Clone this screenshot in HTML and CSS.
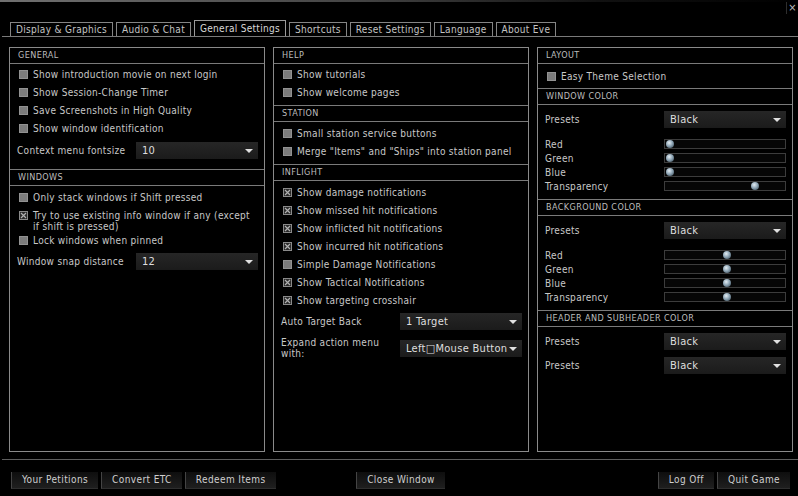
FILE: index.html
```html
<!DOCTYPE html>
<html>
<head>
    <title>Settings</title>
    <link rel="stylesheet" href="styles.css">
</head>
<body>
<div class="window">
    <div class="topline"></div>
    <div class="titlebar"><span class="close">×</span></div>

    <div class="tabs">
        <div class="tab">Display &amp; Graphics</div>
        <div class="tab">Audio &amp; Chat</div>
        <div class="tab active">General Settings</div>
        <div class="tab">Shortcuts</div>
        <div class="tab">Reset Settings</div>
        <div class="tab">Language</div>
        <div class="tab">About Eve</div>
    </div>

    <div class="panels">
        <!-- left column -->
        <div class="panel">
            <div class="section">
                <div class="header">GENERAL</div>
                <div class="rows first general">
                    <div class="row"><span class="box"></span>Show introduction movie on next login</div>
                    <div class="row"><span class="box"></span>Show Session-Change Timer</div>
                    <div class="row"><span class="box"></span>Save Screenshots in High Quality</div>
                    <div class="row"><span class="box"></span>Show window identification</div>
                    <div class="field gap5"><span class="label">Context menu fontsize</span><div class="select">10</div></div>
                </div>
            </div>
            <div class="section">
                <div class="header">WINDOWS</div>
                <div class="rows">
                    <div class="row"><span class="box"></span>Only stack windows if Shift pressed</div>
                    <div class="row wrap"><svg class="box checked" viewBox="0 0 9 9"><rect x="0.5" y="0.5" width="8" height="8" fill="#2a2a2a" stroke="#8a8a8a"/><path d="M2 2L7 7M7 2L2 7" stroke="#b0b0b0" stroke-width="1.2"/></svg><span class="long">Try to use existing info window if any (except if shift is pressed)</span></div>
                    <div class="row"><span class="box"></span>Lock windows when pinned</div>
                    <div class="field gap4"><span class="label">Window snap distance</span><div class="select">12</div></div>
                </div>
            </div>
        </div>

        <!-- middle column -->
        <div class="panel">
            <div class="section">
                <div class="header">HELP</div>
                <div class="rows first short">
                    <div class="row"><span class="box"></span>Show tutorials</div>
                    <div class="row"><span class="box"></span>Show welcome pages</div>
                </div>
            </div>
            <div class="section">
                <div class="header">STATION</div>
                <div class="rows short">
                    <div class="row"><span class="box"></span>Small station service buttons</div>
                    <div class="row"><span class="box"></span>Merge "Items" and "Ships" into station panel</div>
                </div>
            </div>
            <div class="section">
                <div class="header">INFLIGHT</div>
                <div class="rows">
                    <div class="row"><svg class="box checked" viewBox="0 0 9 9"><rect x="0.5" y="0.5" width="8" height="8" fill="#2a2a2a" stroke="#8a8a8a"/><path d="M2 2L7 7M7 2L2 7" stroke="#b0b0b0" stroke-width="1.2"/></svg>Show damage notifications</div>
                    <div class="row"><svg class="box checked" viewBox="0 0 9 9"><rect x="0.5" y="0.5" width="8" height="8" fill="#2a2a2a" stroke="#8a8a8a"/><path d="M2 2L7 7M7 2L2 7" stroke="#b0b0b0" stroke-width="1.2"/></svg>Show missed hit notifications</div>
                    <div class="row"><svg class="box checked" viewBox="0 0 9 9"><rect x="0.5" y="0.5" width="8" height="8" fill="#2a2a2a" stroke="#8a8a8a"/><path d="M2 2L7 7M7 2L2 7" stroke="#b0b0b0" stroke-width="1.2"/></svg>Show inflicted hit notifications</div>
                    <div class="row"><svg class="box checked" viewBox="0 0 9 9"><rect x="0.5" y="0.5" width="8" height="8" fill="#2a2a2a" stroke="#8a8a8a"/><path d="M2 2L7 7M7 2L2 7" stroke="#b0b0b0" stroke-width="1.2"/></svg>Show incurred hit notifications</div>
                    <div class="row"><span class="box"></span>Simple Damage Notifications</div>
                    <div class="row"><svg class="box checked" viewBox="0 0 9 9"><rect x="0.5" y="0.5" width="8" height="8" fill="#2a2a2a" stroke="#8a8a8a"/><path d="M2 2L7 7M7 2L2 7" stroke="#b0b0b0" stroke-width="1.2"/></svg>Show Tactical Notifications</div>
                    <div class="row"><svg class="box checked" viewBox="0 0 9 9"><rect x="0.5" y="0.5" width="8" height="8" fill="#2a2a2a" stroke="#8a8a8a"/><path d="M2 2L7 7M7 2L2 7" stroke="#b0b0b0" stroke-width="1.2"/></svg>Show targeting crosshair</div>
                    <div class="field gap4"><span class="label">Auto Target Back</span><div class="select">1 Target</div></div>
                    <div class="field gap7"><span class="label two">Expand action menu with:</span><div class="select">Left&#x25A1;Mouse Button</div></div>
                </div>
            </div>
        </div>

        <!-- right column -->
        <div class="panel">
            <div class="section">
                <div class="header">LAYOUT</div>
                <div class="rows layout">
                    <div class="row"><span class="box"></span>Easy Theme Selection</div>
                </div>
            </div>
            <div class="section">
                <div class="header">WINDOW COLOR</div>
                <div class="rows color">
                    <div class="field gap6"><span class="label">Presets</span><div class="select">Black</div></div>
                    <div class="sliders">
                        <div class="slider"><span class="label">Red</span><div class="track"><span class="knob" style="left: 1px"></span></div></div>
                        <div class="slider"><span class="label">Green</span><div class="track"><span class="knob" style="left: 1px"></span></div></div>
                        <div class="slider"><span class="label">Blue</span><div class="track"><span class="knob" style="left: 1px"></span></div></div>
                        <div class="slider"><span class="label">Transparency</span><div class="track"><span class="knob" style="left: 86px"></span></div></div>
                    </div>
                </div>
            </div>
            <div class="section">
                <div class="header">BACKGROUND COLOR</div>
                <div class="rows color">
                    <div class="field gap6"><span class="label">Presets</span><div class="select">Black</div></div>
                    <div class="sliders">
                        <div class="slider"><span class="label">Red</span><div class="track"><span class="knob" style="left: 58px"></span></div></div>
                        <div class="slider"><span class="label">Green</span><div class="track"><span class="knob" style="left: 58px"></span></div></div>
                        <div class="slider"><span class="label">Blue</span><div class="track"><span class="knob" style="left: 58px"></span></div></div>
                        <div class="slider"><span class="label">Transparency</span><div class="track"><span class="knob" style="left: 58px"></span></div></div>
                    </div>
                </div>
            </div>
            <div class="section">
                <div class="header">HEADER AND SUBHEADER COLOR</div>
                <div class="rows flush">
                    <div class="field gap6"><span class="label">Presets</span><div class="select">Black</div></div>
                    <div class="field gap7"><span class="label">Presets</span><div class="select">Black</div></div>
                </div>
            </div>
        </div>
    </div>

    <div class="footer">
        <div class="group">
            <button class="btn">Your Petitions</button>
            <button class="btn">Convert ETC</button>
            <button class="btn">Redeem Items</button>
        </div>
        <div class="group">
            <button class="btn">Close Window</button>
        </div>
        <div class="group right">
            <button class="btn">Log Off</button>
            <button class="btn">Quit Game</button>
        </div>
    </div>
</div>
</body>
</html>
```

FILE: styles.css
```css
* {
    box-sizing: border-box;
}

body {
    margin: 0;
    background-color: #000;
    color: #c8c8c8;
    font-family: "DejaVu Sans Condensed", "DejaVu Sans", sans-serif;
    font-stretch: condensed;
    font-size: 10px;
    letter-spacing: 0.3px;
}

.window {
    width: 798px;
    height: 496px;
    padding-left: 2px;
    overflow: hidden;
}

.topline {
    height: 2px;
    margin-left: -2px;
    background: linear-gradient(to right, #707070, #444 45%, #111 75%, #000);
}

.titlebar {
    height: 18px;
    display: flex;
    justify-content: flex-end;
}

.close {
    width: 12px;
    height: 12px;
    border-left: 1px solid #2e2e2e;
    color: #bbb;
    font-size: 11px;
    line-height: 12px;
    text-align: center;
    letter-spacing: 0;
}

/* tabs */
.tabs {
    display: flex;
    align-items: flex-end;
    gap: 3px;
    height: 17px;
    padding-left: 8px;
    border-bottom: 1px solid #7a7a7a;
}

.tab {
    height: 14px;
    padding: 0 5px;
    border: 1px solid #858585;
    border-bottom: none;
    line-height: 13px;
    color: #c4c4c4;
}

.tab.active {
    height: 16px;
    line-height: 15px;
    border-color: #9a9a9a;
    color: #d8d8d8;
}

/* panels */
.panels {
    display: grid;
    grid-template-columns: 256px 256px 256px;
    column-gap: 8px;
    margin: 10px 0 0 7px;
}

.panel {
    height: 405px;
    border: 1px solid #8a8a8a;
}

.header {
    height: 16px;
    padding-left: 8px;
    border-bottom: 1px solid #7a7a7a;
    font-size: 9px;
    line-height: 15px;
    color: #bdbdbd;
    letter-spacing: 0.4px;
}

.section + .section .header {
    height: 17px;
    border-top: 1px solid #7a7a7a;
}

.rows {
    padding: 2px 0 0 0;
}

.rows.first {
    padding-top: 1px;
}

.rows.general {
    padding-bottom: 10px;
}

.rows.short {
    padding-bottom: 4px;
}

.rows.layout {
    padding: 3px 0 3px;
}

.rows.color {
    padding: 0 0 6px;
}

.rows.flush {
    padding-top: 0;
}

.row {
    display: flex;
    align-items: center;
    height: 18px;
    padding-left: 9px;
    white-space: nowrap;
}

.row.wrap {
    align-items: flex-start;
    height: 25px;
    padding-top: 4px;
    line-height: 11px;
    white-space: normal;
}

.row.wrap .box {
    margin-top: 1px;
    flex-shrink: 0;
}

.long {
    max-width: 222px;
}

.box {
    display: inline-block;
    width: 9px;
    height: 9px;
    margin-right: 5px;
    background-color: #7c7c7c;
    border: 1px solid #929292;
}

.box.checked {
    background: none;
    border: none;
}

/* label + dropdown */
.field {
    display: flex;
    align-items: center;
    padding: 0 6px 0 7px;
}

.gap4 { margin-top: 4px; }
.gap5 { margin-top: 5px; }
.gap6 { margin-top: 6px; }
.gap7 { margin-top: 7px; }

.label {
    width: 119px;
    flex-shrink: 0;
    white-space: nowrap;
}

.label.two {
    white-space: normal;
    line-height: 11px;
    padding-right: 10px;
}

.select {
    position: relative;
    width: 123px;
    height: 17px;
    padding-left: 6px;
    background: linear-gradient(to bottom, #262626, #1b1b1b);
    color: #dedede;
    font-size: 11px;
    line-height: 17px;
    white-space: nowrap;
}

.select::after {
    content: "";
    position: absolute;
    right: 5px;
    top: 7px;
    border-left: 4px solid transparent;
    border-right: 4px solid transparent;
    border-top: 4px solid #e0e0e0;
}

/* sliders */
.sliders {
    margin-top: 9px;
}

.slider {
    display: flex;
    align-items: center;
    height: 14px;
    padding: 0 6px 0 7px;
}

.track {
    position: relative;
    width: 123px;
    height: 10px;
    border: 1px solid #3c3c3c;
    background-color: #060606;
}

.knob {
    position: absolute;
    top: 0;
    width: 8px;
    height: 8px;
    border-radius: 50%;
    background: radial-gradient(circle at 40% 35%, #e4edf3, #8fa6b6 45%, #3e4f5b 90%);
}

/* footer */
.footer {
    display: grid;
    grid-template-columns: 1fr auto 1fr;
    margin-top: 7px;
    padding: 12px 8px 0 9px;
    border-top: 1px solid #5e5e5e;
}

.group {
    display: flex;
    gap: 3px;
}

.group.right {
    justify-self: end;
}

.btn {
    height: 17px;
    padding: 0 10px;
    border: none;
    border-left: 1px solid #444;
    border-bottom: 1px solid #2e2e2e;
    background: linear-gradient(to bottom, #0e0e0e, #1f1f1f);
    color: #cfcfcf;
    font-family: inherit;
    font-stretch: condensed;
    font-size: 10px;
    letter-spacing: 0.4px;
    line-height: 16px;
}
```
